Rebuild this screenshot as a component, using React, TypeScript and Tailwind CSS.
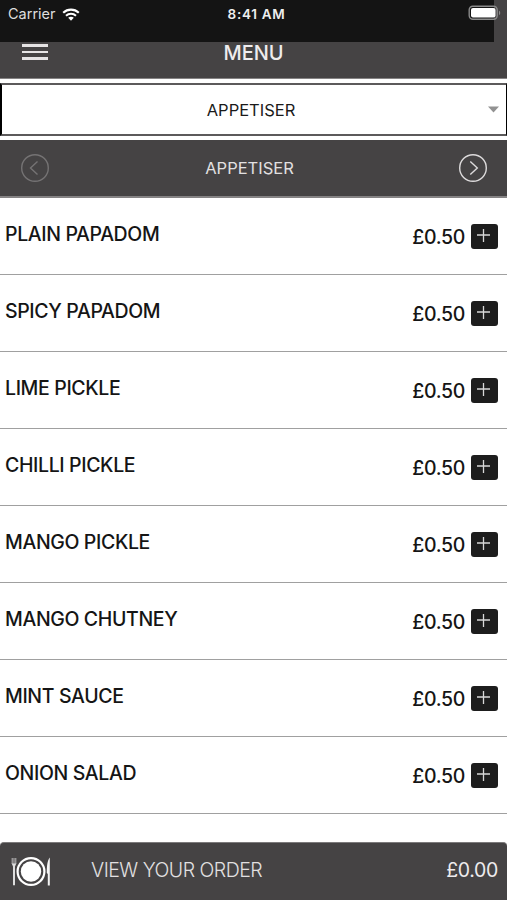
import { FC } from "react";

interface MenuItem {
  name: string;
  price: string;
}

const items: MenuItem[] = [
  { name: "PLAIN PAPADOM", price: "£0.50" },
  { name: "SPICY PAPADOM", price: "£0.50" },
  { name: "LIME PICKLE", price: "£0.50" },
  { name: "CHILLI PICKLE", price: "£0.50" },
  { name: "MANGO PICKLE", price: "£0.50" },
  { name: "MANGO CHUTNEY", price: "£0.50" },
  { name: "MINT SAUCE", price: "£0.50" },
  { name: "ONION SALAD", price: "£0.50" },
];

const StatusBar: FC = () => (
  <div className="relative h-[42px] bg-[#454344] pr-[13px]">
    <div className="grid h-full grid-cols-[170px_1fr_157px] bg-[#141414] text-white">
      <div className="flex h-7 items-center pl-2">
        <span className="text-[14.5px] text-[#dedede]">Carrier</span>
        <svg className="ml-[6px] h-[13px] w-[18px]" viewBox="0 0 18 13" fill="none">
          <path d="M1.2 4.8C5.6.6 12.4.6 16.8 4.8" stroke="#fff" strokeWidth="2.1" />
          <path d="M4 7.8c2.8-2.6 7.2-2.6 10 0" stroke="#fff" strokeWidth="2" />
          <path d="M6.2 9.8c1.5-1.4 4.1-1.4 5.6 0L9 12.7z" fill="#fff" />
        </svg>
      </div>
      <div className="flex h-7 items-center justify-center pl-[6px] text-[13.5px] font-semibold tracking-[0.7px] text-[#eeeeee]">
        8:41 AM
      </div>
    </div>
    <svg className="absolute top-[5px] left-[468px] h-4 w-[34px]" viewBox="0 0 34 16" fill="none">
      <rect x="1.2" y="1.2" width="28" height="13" rx="3.6" stroke="#8a8a8a" strokeWidth="1.4" />
      <rect x="3" y="3" width="24.5" height="9.5" rx="2" fill="#fff" />
      <path d="M31 5.800c1.600.5 1.600 3.900 0 4.400z" fill="#8a8a8a" />
    </svg>
  </div>
);

const Header: FC = () => (
  <header className="grid h-[37px] grid-cols-[170px_1fr_170px] border-b border-[#858384] bg-[#454344]">
    <div className="flex flex-col gap-1 pt-[2px] pl-[22px]">
      <span className="h-[2.5px] w-[26px] bg-[#e6e4e5]" />
      <span className="h-[2.5px] w-[26px] bg-[#e6e4e5]" />
      <span className="h-[2.5px] w-[26px] bg-[#e6e4e5]" />
    </div>
    <h1 className="pt-px text-center text-[20px] leading-[21px] font-medium text-[#eeecee]">MENU</h1>
  </header>
);

const CategorySelect: FC = () => (
  <div className="mt-1 flex h-[53px] items-center border-2 border-r border-y-[#5c5a5b] border-l-black border-r-black bg-white pr-[7px] pl-3">
    <span className="flex-1 pt-px text-center text-[16.5px] text-[#1a1a1a]">APPETISER</span>
    <svg className="h-[7px] w-[11px]" viewBox="0 0 11 7">
      <path d="M0 .4h11L5.5 6.4z" fill="#929292" />
    </svg>
  </div>
);

const CategoryBar: FC = () => (
  <div className="mt-1 flex h-[58px] items-center justify-between border-b-2 border-[#858384] bg-[#454344] pr-[19px] pl-5">
    <svg className="h-[30px] w-[30px]" viewBox="0 0 30 30" fill="none" stroke="#757374" strokeWidth="1.4">
      <circle cx="15" cy="15" r="13.3" />
      <path d="M17.5 8.5 10.500 15l7 6.5" />
    </svg>
    <span className="pr-[9px] text-[16.5px] text-[#e2e0e1]">APPETISER</span>
    <svg className="h-[30px] w-[30px]" viewBox="0 0 30 30" fill="none" stroke="#dddbdc" strokeWidth="1.4">
      <circle cx="15" cy="15" r="13.3" />
      <path d="m12.300 8.5 7 6.5-7 6.5" />
    </svg>
  </div>
);

const ItemRow: FC<{ item: MenuItem }> = ({ item }) => (
  <li className="flex h-[76.94px] items-start justify-between border-b-[1.5px] border-[#a0a0a0] pr-[9px] pl-[5px]">
    <span className="pt-[24px] text-[19.5px] leading-6 font-medium tracking-[-0.37px] text-[#151515]">
      {item.name}
    </span>
    <div className="flex pt-[26px]">
      <span className="pt-px text-[19.5px] leading-6 font-medium tracking-[-0.35px] text-[#151515]">
        {item.price}
      </span>
      <button className="ml-[6px] flex h-[25px] w-[27px] justify-center rounded-[3px] bg-[#1d1d1d] pt-[5px] pr-[2px]">
        <svg className="h-[13px] w-[13px]" viewBox="0 0 13 13" stroke="#d8d8d8" strokeWidth="1.3">
          <path d="M6.5 0v13M0 6h13" />
        </svg>
      </button>
    </div>
  </li>
);

const OrderBar: FC = () => (
  <footer className="mt-auto flex h-[58px] items-center rounded-t-[4px] border-t border-[#7c7a7b] bg-[#454344] pr-[9px] pl-[11px]">
    <svg className="h-[31px] w-10" viewBox="0 0 40 31" fill="none">
      <path d="M1.2 2v6M3 2v6M4.8 2v6" stroke="#bdbbbc" strokeWidth="1" />
      <path d="M.7 7.5h4.600L4 10.500v18.700H2V10.500z" fill="#ddd" />
      <circle cx="20" cy="15.5" r="13.4" stroke="#fff" strokeWidth="2.2" />
      <circle cx="20" cy="15.5" r="10.2" fill="#fff" />
      <path d="M38.800 1.500v28h-2V18l-1-1c0-7 .5-12.500 3-15.500z" fill="#f4f4f4" />
    </svg>
    <span className="ml-10 flex-1 pb-[2px] text-[19.5px] font-light tracking-[-0.5px] text-[#e2e0e1]">
      VIEW YOUR ORDER
    </span>
    <span className="pb-[2px] text-[19.5px] tracking-[-0.35px] text-[#eeecee]">£0.00</span>
  </footer>
);

export default function App() {
  return (
    <div className="flex h-[900px] w-[507px] flex-col overflow-hidden bg-white font-['Inter',sans-serif]">
      <StatusBar />
      <Header />
      <CategorySelect />
      <CategoryBar />
      <ul>
        {items.map((item) => (
          <ItemRow key={item.name} item={item} />
        ))}
      </ul>
      <OrderBar />
    </div>
  );
}
